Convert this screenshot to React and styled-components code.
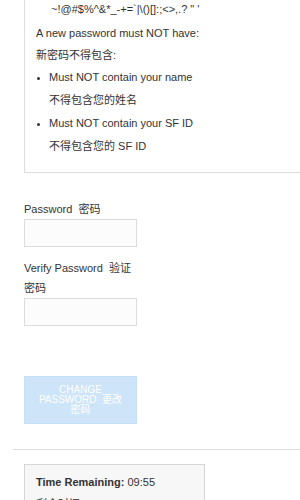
import React from 'react';
import styled, { createGlobalStyle } from 'styled-components';

const GlobalStyle = createGlobalStyle`
  html, body {
    margin: 0;
    padding: 0;
    overflow: hidden;
    background: #fff;
  }
  body {
    font-family: 'Liberation Sans', Arial, 'Noto Sans CJK SC', sans-serif;
    font-size: 11px;
    color: #333;
  }
`;

const Page = styled.div`
  margin-top: -11px;
  padding-left: 13px;
  width: 330px;
`;

const RulesBox = styled.div`
  margin-left: 11px;
  width: 300px;
  border: 1px solid #ddd;
  padding: 8px 0 14px 11px;
`;

const Line = styled.div`
  line-height: 22px;
  padding-left: ${({ $indent }) => $indent || 0}px;
  margin-top: ${({ $gap }) => $gap || 0}px;
  white-space: nowrap;
`;

const RuleList = styled.ul`
  margin: 0;
  padding-left: 13px;
  list-style: disc;

  li {
    line-height: 23px;
  }
  li::marker {
    font-size: 9px;
  }
`;

const Form = styled.form`
  margin: 26px 0 0 11px;
  width: 113px;
`;

const Label = styled.label`
  display: block;
  line-height: 20px;
  margin-top: ${({ $gap }) => $gap || 0}px;
`;

const Input = styled.input`
  display: block;
  box-sizing: border-box;
  width: 113px;
  height: 28px;
  margin: 0;
  border: 1px solid #dcdcdc;
  background: #fcfcfc;
`;

const SubmitButton = styled.button`
  display: block;
  box-sizing: border-box;
  width: 113px;
  height: 48px;
  margin-top: 50px;
  padding: 0 11px;
  border: 1px solid #c6e0f7;
  background: #cde4f9;
  color: #fff;
  font-family: 'Liberation Sans', Arial, 'Noto Sans CJK SC', sans-serif;
  font-size: 10px;
  line-height: 10px;
  text-transform: uppercase;
  text-align: center;
`;

const Divider = styled.hr`
  margin: 25px 0 0 0;
  border: 0;
  border-top: 1px solid #ddd;
  width: 317px;
`;

const TimerBox = styled.div`
  margin: 14px 0 0 11px;
  box-sizing: border-box;
  width: 181px;
  background: #f7f7f7;
  border: 1px solid #d6d6d6;
  padding: 6px 11px;

  div {
    line-height: 22px;
  }

  b {
    font-weight: bold;
  }
`;

export default function App() {
  return (
    <>
      <GlobalStyle />
      <Page>
        <RulesBox>
          <Line $indent={15}>~!@#$%^&amp;*_-+=`|\(){}[]:;&lt;&gt;,.? " '</Line>
          <Line $gap={2}>A new password must NOT have:</Line>
          <Line>新密码不得包含:</Line>
          <RuleList>
            <li>
              Must NOT contain your name
              <br />
              不得包含您的姓名
            </li>
            <li>
              Must NOT contain your SF ID
              <br />
              不得包含您的 SF ID
            </li>
          </RuleList>
        </RulesBox>

        <Form onSubmit={(e) => e.preventDefault()}>
          <Label htmlFor="pw">Password&nbsp; 密码</Label>
          <Input id="pw" type="password" />
          <Label htmlFor="pw2" $gap={11}>
            Verify Password&nbsp; 验证密码
          </Label>
          <Input id="pw2" type="password" />
          <SubmitButton type="submit" disabled>
            Change Password&nbsp; 更改密码
          </SubmitButton>
        </Form>

        <Divider />

        <TimerBox>
          <div>
            <b>Time Remaining:</b> 09:55
          </div>
          <div>剩余时间: 09:55</div>
        </TimerBox>
      </Page>
    </>
  );
}
